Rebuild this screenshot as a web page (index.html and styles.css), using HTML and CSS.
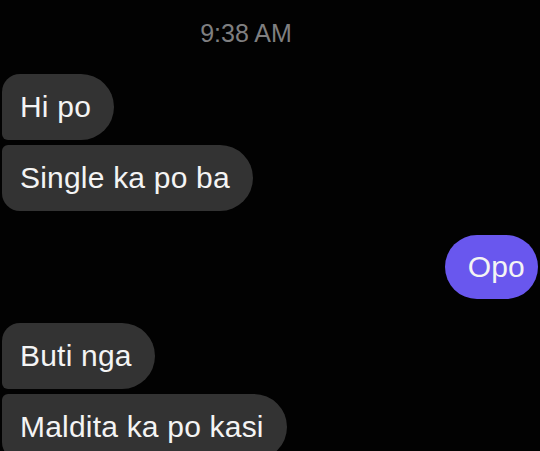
FILE: index.html
```html
<!DOCTYPE html>
<html>
<head>
<meta charset="utf-8">
<link rel="stylesheet" href="styles.css">
</head>
<body>
<div class="thread">
  <div class="time">9:38 AM</div>
  <div class="group in first-group">
    <div class="bubble in-first">Hi po</div>
    <div class="bubble in-last">Single ka po ba</div>
  </div>
  <div class="group out">
    <div class="bubble sent">Opo</div>
  </div>
  <div class="group in">
    <div class="bubble in-first">Buti nga</div>
    <div class="bubble in-last">Maldita ka po kasi</div>
  </div>
</div>
</body>
</html>
```
FILE: styles.css
```css
html, body {
  margin: 0;
  padding: 0;
  background: #020202;
  height: 100%;
  overflow: hidden;
}
.thread {
  display: flex;
  flex-direction: column;
  font-family: "Liberation Sans", Arial, sans-serif;
  padding-top: 18px;
}
.time {
  font-size: 25px;
  line-height: 30px;
  color: #7f7f80;
  text-align: center;
  padding-right: 48px;
  margin-bottom: 26px;
}
.group {
  display: flex;
  flex-direction: column;
  gap: 5px;
  margin-bottom: 24px;
}
.group.in {
  align-items: flex-start;
  padding-left: 2px;
}
.group.out {
  align-items: flex-end;
  padding-right: 2px;
}
.bubble {
  font-size: 30px;
  line-height: 36px;
  color: #f4f4f4;
  padding: 15px 23px 15px 18px;
  background: #333333;
  border-radius: 6px 33px 33px 6px;
  letter-spacing: 0.2px;
}
.bubble.in-first {
  border-radius: 18px 33px 33px 6px;
}
.bubble.in-last {
  border-radius: 6px 33px 33px 18px;
}
.bubble.sent {
  background: #6957ee;
  padding: 14px 13px 14px 23px;
  border-radius: 33px;
}
```
